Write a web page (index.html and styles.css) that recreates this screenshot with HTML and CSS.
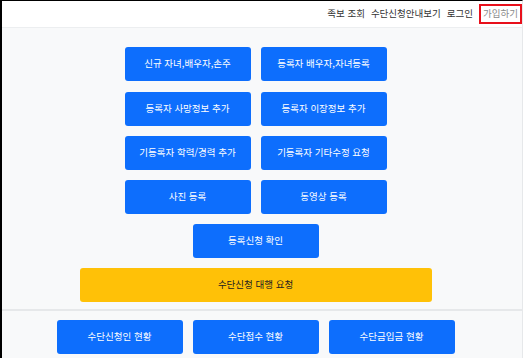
FILE: index.html
```html
<!DOCTYPE html>
<html lang="ko">
  <head>
    <meta charset="UTF-8">
    <title>수단신청</title>
    <link rel="stylesheet" href="styles.css">
  </head>
  <body>
    <div id="frame">
      <div class="top">
        <a class="nav">족보 조회</a>
        <a class="nav">수단신청안내보기</a>
        <a class="nav">로그인</a>
        <a class="nav join">가입하기</a>
      </div>
      <div class="main">
        <div class="row">
          <a class="btn">신규 자녀,배우자,손주</a>
          <a class="btn">등록자 배우자,자녀등록</a>
        </div>
        <div class="row">
          <a class="btn">등록자 사망정보 추가</a>
          <a class="btn">등록자 이장정보 추가</a>
        </div>
        <div class="row">
          <a class="btn">기등록자 학력/경력 추가</a>
          <a class="btn">기등록자 기타수정 요청</a>
        </div>
        <div class="row">
          <a class="btn">사진 등록</a>
          <a class="btn">동영상 등록</a>
        </div>
        <div class="row">
          <a class="btn">등록신청 확인</a>
        </div>
        <div class="row">
          <a class="btn wide">수단신청 대행 요청</a>
        </div>
      </div>
      <div class="bottom">
        <div class="row">
          <a class="btn">수단신청인 현황</a>
          <a class="btn">수단접수 현황</a>
          <a class="btn">수단금입금 현황</a>
        </div>
      </div>
    </div>
  </body>
</html>
```

FILE: styles.css
```css
html, body { margin: 0; padding: 0; }
body { background: #f8f9fa; font: 9.5px/1 "Noto Sans CJK KR", "Noto Sans", sans-serif; }
a { text-decoration: none; cursor: pointer; }
#frame { height: 357px; border-top: 1px solid #000; border-left: 2px solid #000; border-right: 1px solid #e6e8ea; background: #f8f9fa; overflow: hidden; }
.top { display: flex; justify-content: flex-end; align-items: center; gap: 6px; height: 26px; padding-right: 0; background: #fff; border-bottom: 1px solid #eceef0; }
.top .nav { color: #333; font-size: 9.5px; }
.top .join { color: #8a8a8a; border: 2px solid #e8101b; padding: 3px 2px 4px; }
.main { display: flex; flex-direction: column; gap: 10px; padding: 19px 13px 0 0; }
.row { display: flex; justify-content: center; gap: 10px; }
.main .row:first-child { margin-bottom: 1px; }
.btn { display: flex; align-items: center; justify-content: center; width: 126px; height: 34px; box-sizing: border-box; background: #0d6efd; color: #fff; border-radius: 3px; }
.btn.wide { width: 352px; background: #ffc107; color: #222; }
.bottom { margin-top: 7px; padding: 9px 13px 0 0; border-top: 2px solid #e6e8ea; }
```
